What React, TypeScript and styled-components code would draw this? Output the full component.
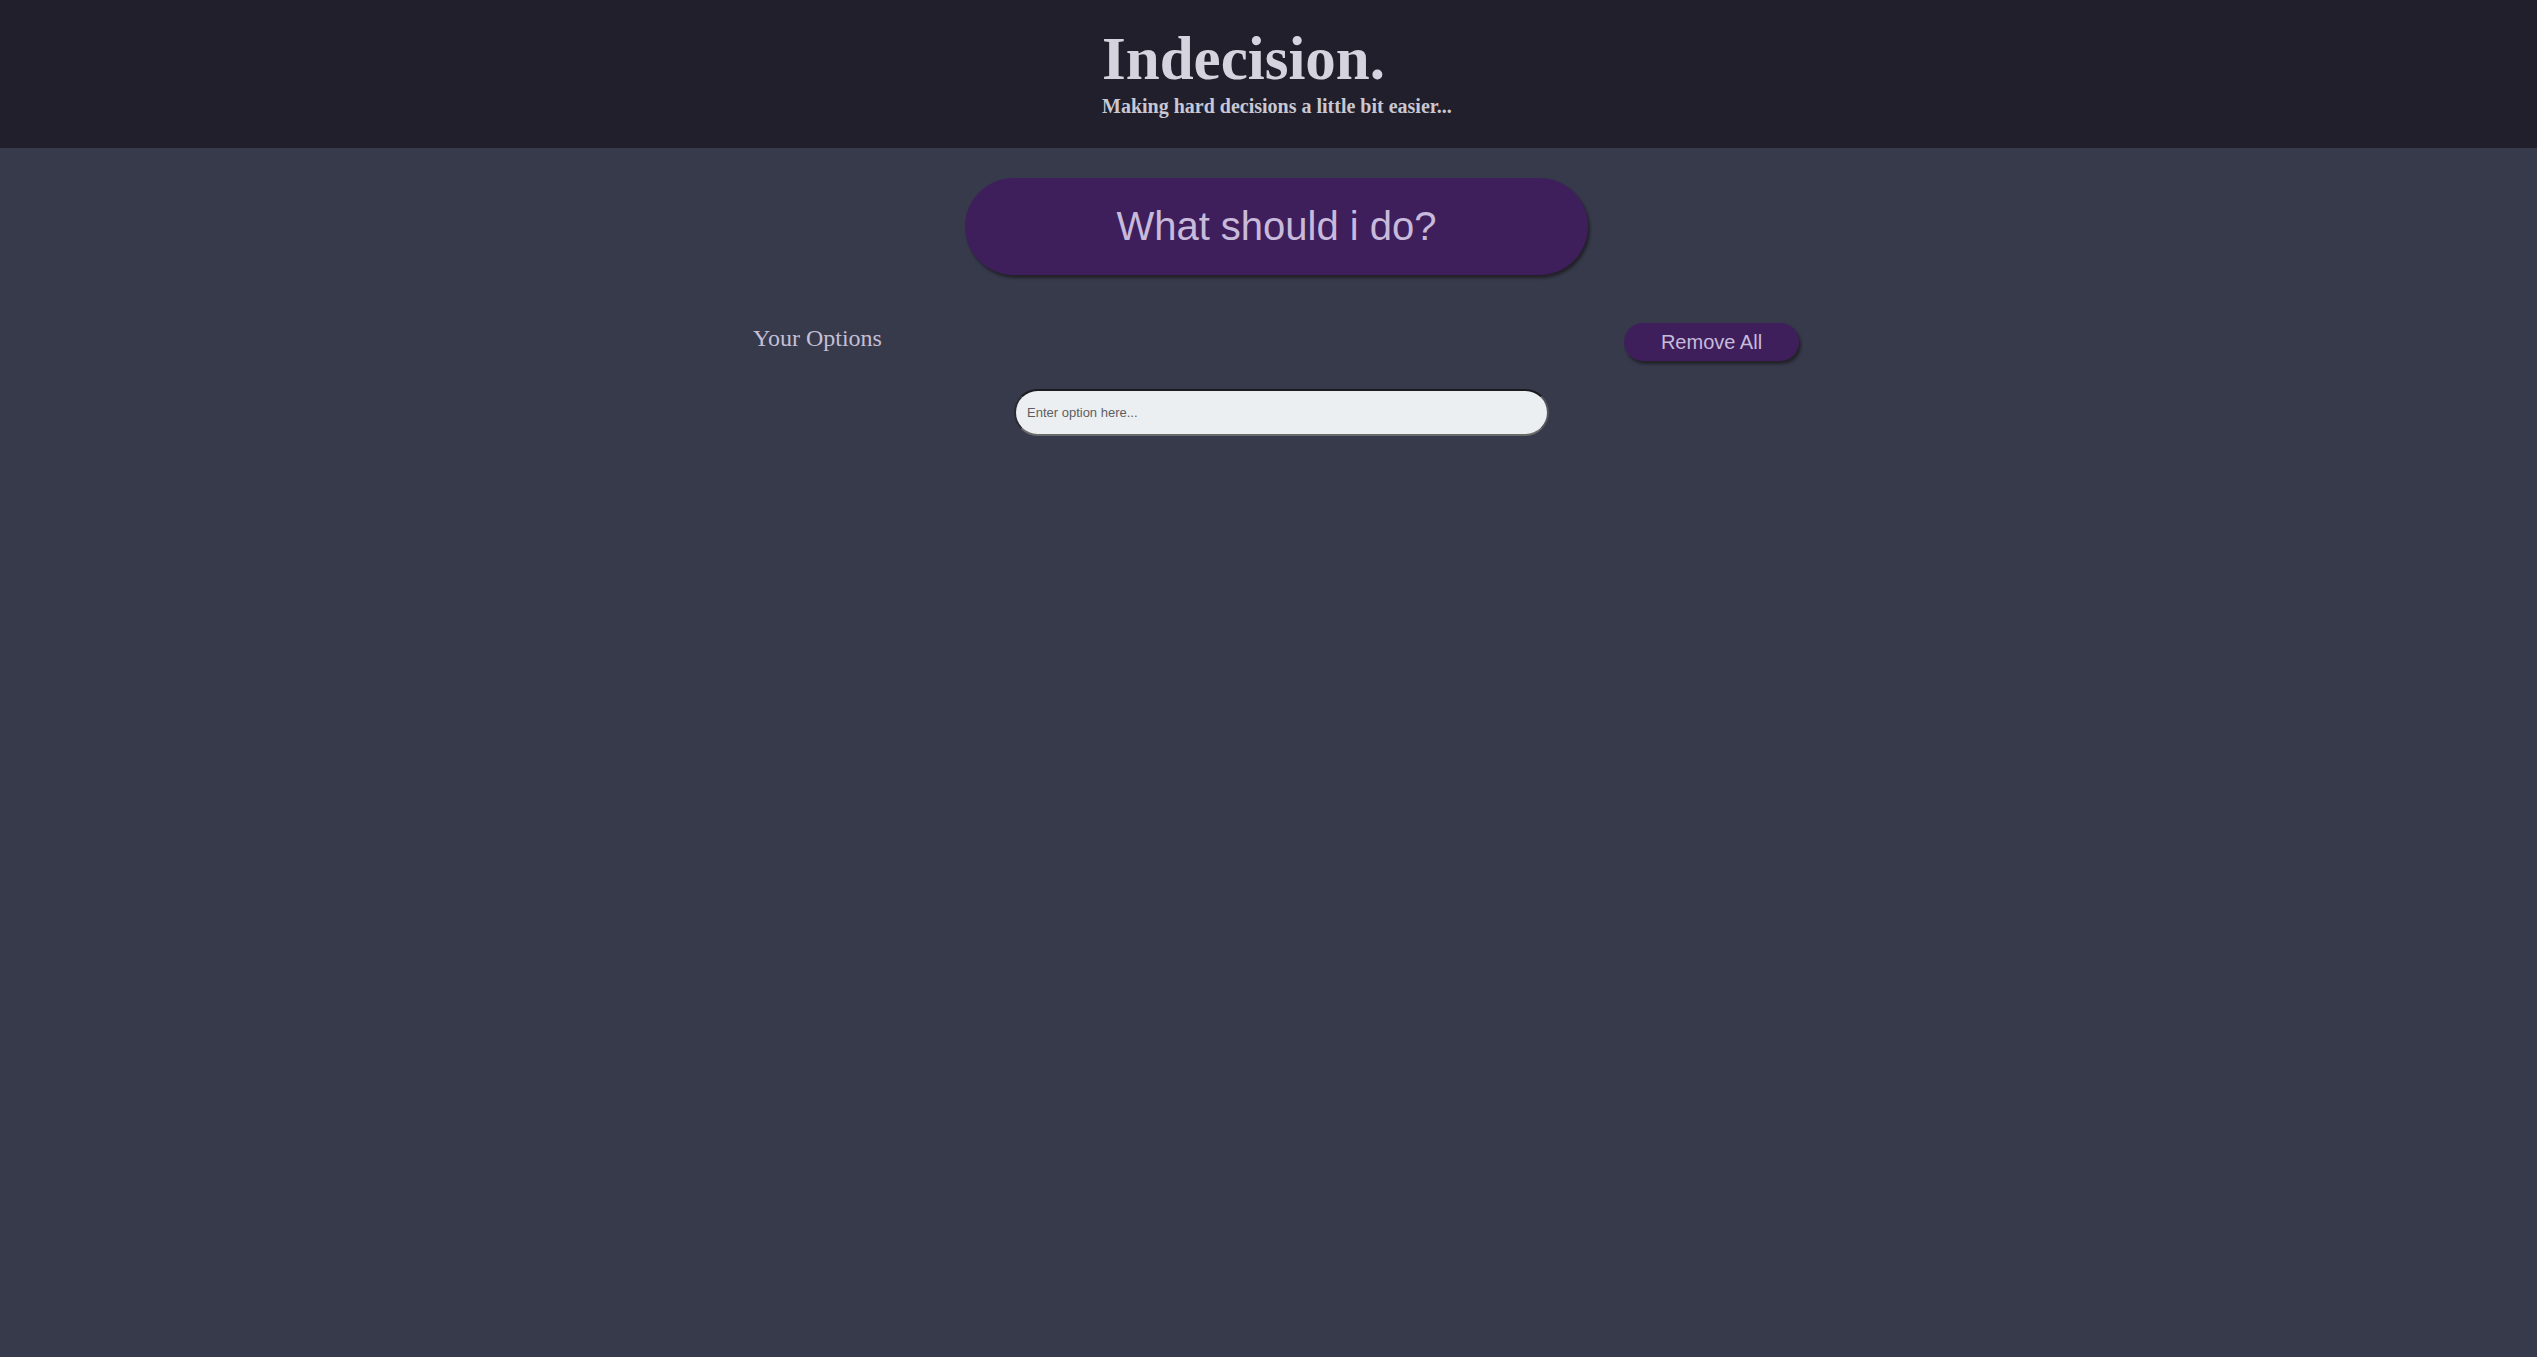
import React from "react";
import styled, { createGlobalStyle } from "styled-components";

const GlobalStyle = createGlobalStyle`
  html, body {
    margin: 0;
    padding: 0;
    background: #363a4b;
    min-height: 100%;
  }
  body {
    font-family: "Liberation Serif", "Times New Roman", serif;
    min-height: 1357px;
  }
`;

const Header = styled.header`
  background: #201f2b;
  height: 148px;
  box-sizing: border-box;
  padding-top: 25px;
`;

const Container = styled.div`
  width: 1046px;
  margin-left: calc(50% - 515.5px);
`;

const HeaderInner = styled.div`
  margin-left: 349px;
`;

const Title = styled.h1`
  margin: 0;
  font-family: "Liberation Serif", "Times New Roman", serif;
  font-weight: 700;
  font-size: 61px;
  line-height: 68px;
  color: #d5d3dd;
`;

const Subtitle = styled.h2`
  margin: 1px 0 0;
  font-family: "Liberation Serif", "Times New Roman", serif;
  font-weight: 700;
  font-size: 20px;
  line-height: 24px;
  color: #c9c7d2;
`;

const Main = styled.main`
  padding-top: 30px;
`;

const BigButton = styled.button`
  display: block;
  margin-left: 212px;
  width: 623px;
  height: 97px;
  border: none;
  border-radius: 49px;
  background: #3e1f5c;
  color: #c8badb;
  font-family: "Liberation Sans", Arial, sans-serif;
  font-size: 40px;
  box-shadow: 2px 3px 3px #232129;
  cursor: pointer;
  padding: 0;
`;

const OptionsRow = styled.div`
  display: flex;
  justify-content: space-between;
  align-items: flex-start;
  margin-top: 48px;
`;

const OptionsTitle = styled.h3`
  margin: 0;
  padding-top: 1px;
  font-family: "Liberation Serif", "Times New Roman", serif;
  font-weight: 400;
  font-size: 24px;
  line-height: 28px;
  color: #c5bfd5;
`;

const SmallButton = styled.button`
  width: 175px;
  height: 38px;
  border: none;
  border-radius: 19px;
  background: #3e1f5c;
  color: #c8badb;
  font-family: "Liberation Sans", Arial, sans-serif;
  font-size: 20px;
  box-shadow: 2px 3px 3px #232129;
  padding: 0;
  cursor: pointer;
`;

const Form = styled.form`
  margin-top: 28px;
  margin-left: 261px;
`;

const Input = styled.input`
  display: block;
  box-sizing: border-box;
  width: 535px;
  height: 47px;
  border-radius: 24px;
  border: 2px solid;
  border-color: #1b1b20 #55565c #6a6a6a #2a2a30;
  background: #eceff1;
  padding: 0 11px;
  font-family: "Liberation Sans", Arial, sans-serif;
  font-size: 13px;
  color: #333;
  outline: none;
  &::placeholder {
    color: #5e5e62;
  }
`;

export default function App() {
  return (
    <>
      <GlobalStyle />
      <Header>
        <Container>
          <HeaderInner>
            <Title>Indecision.</Title>
            <Subtitle>Making hard decisions a little bit easier...</Subtitle>
          </HeaderInner>
        </Container>
      </Header>
      <Main>
        <Container>
          <BigButton>What should i do?</BigButton>
          <OptionsRow>
            <OptionsTitle>Your Options</OptionsTitle>
            <SmallButton>Remove All</SmallButton>
          </OptionsRow>
          <Form onSubmit={(e) => e.preventDefault()}>
            <Input type="text" placeholder="Enter option here..." />
          </Form>
        </Container>
      </Main>
    </>
  );
}
